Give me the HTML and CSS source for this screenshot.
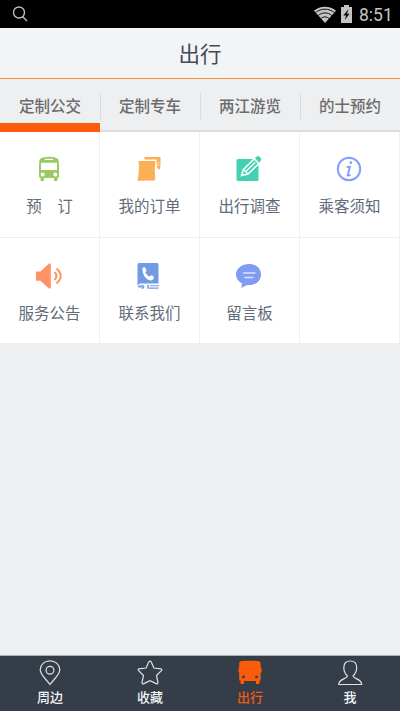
FILE: index.html
```html
<!DOCTYPE html>
<html lang="zh-CN">
<head>
<meta charset="utf-8">
<title>出行</title>
<link rel="stylesheet" href="styles.css">
</head>
<body>
<div class="screen">
  <div class="status">
    <svg class="search" width="16" height="16" viewBox="0 0 16 16" fill="none" stroke="#bdbdbd" stroke-width="1.4"><circle cx="7" cy="6.5" r="5.5"/><path d="M10.5 10.5 15 15"/></svg>
    <div class="status-right">
      <svg width="22" height="17" viewBox="0 0 22 17"><path fill="#c4c4c4" d="M0 4.7C6-.7 16-.7 22 4.7L11 17Z"/><path d="M1.5 6.7C7 2 15 2 20.500 6.700M4 9.600c4-3.600 10-3.600 14 0M6.700 12.700c2.500-2.400 6.100-2.400 8.600 0" fill="none" stroke="#111" stroke-width="1"/></svg>
      <svg width="11" height="18" viewBox="0 0 11 18"><path fill="#c4c4c4" d="M3 0h5v2h3v16H0V2h3Z"/><path fill="#111" d="M7.500 4 2.300 10.500h2.800L3.700 15l5-6.300H6Z"/></svg>
      <span class="clock">8:51</span>
    </div>
  </div>
  <header class="title">出行</header>
  <nav class="tabs">
    <div class="tab active">定制公交</div>
    <div class="tab">定制专车</div>
    <div class="tab">两江游览</div>
    <div class="tab">的士预约</div>
  </nav>
  <main class="grid">
    <div class="cell">
      <svg class="icon" viewBox="0 0 26 26"><path fill="#9bca63" fill-rule="evenodd" d="M3.500 4Q4 1 13 .700 22 1 22.500 4L23 9V21.500H21.500V24.500Q19.700 26 18 24.500V22H8V24.500Q6.300 26 4.500 24.500V21.500H3V9ZM9 2.700V4.100H17V2.700ZM5 6.700V14H21V6.700ZM6.700 16.600a2 2 0 1 0 0 4 2 2 0 1 0 0-4ZM19.300 16.600a2 2 0 1 0 0 4 2 2 0 1 0 0-4Z"/></svg>
      <span>预　订</span>
    </div>
    <div class="cell">
      <svg class="icon" viewBox="0 0 26 26"><path fill="#fbb056" d="M2.500 5H19.500Q18 14 19.300 23.500 18 25 16 24.500L1.500 24.700Q3.800 14 2.500 5ZM8.500 1H24.500V10L23.500 14 20.800 11.500V3.500H8.500Z"/><path d="M23 6 21.600 10.500" stroke="#fff" stroke-width=".7"/></svg>
      <span>我的订单</span>
    </div>
    <div class="cell">
      <svg class="icon" viewBox="0 0 26 26"><rect x=".5" y="3" width="22" height="22" rx="1.500" fill="#42d2b3"/><path d="M5.500 19.500 7.300 13.700 18.500 2.500 23.500 7 12 18Z" fill="#42d2b3" stroke="#fff" stroke-width="1.500"/><path d="M8 14 11.500 17.500M9.800 15.500 19 6.500M5 20l3-2" stroke="#fff" stroke-width="1.200"/><path d="m19 2 2-1.700q1.500-.6 2.800.7l1 1q1 1.500 0 2.700L23 6.500Z" fill="#42d2b3"/><path d="m17.500 3 5 5" stroke="#fff"/></svg>
      <span>出行调查</span>
    </div>
    <div class="cell">
      <svg class="icon" viewBox="0 0 26 26"><circle cx="13" cy="13" r="11.200" fill="none" stroke="#849eff" stroke-width="2"/><circle cx="14.800" cy="6.700" r="1.400" fill="#849eff"/><path d="M10.700 11h3.200L11.700 19.500q.8.500 2.700-.8" fill="none" stroke="#849eff" stroke-width="1.900"/></svg>
      <span>乘客须知</span>
    </div>
    <div class="cell">
      <svg class="icon" viewBox="0 0 26 26"><path fill="#fe9265" d="M0 8.500h4.500L13 .500h1.800v25H13L4.500 17.800H0Z"/><path d="M18.500 9q4 4 0 8M20.500 5.500q8.500 7.500 0 15" fill="none" stroke="#fe9265" stroke-width="2"/></svg>
      <span>服务公告</span>
    </div>
    <div class="cell">
      <svg class="icon" viewBox="0 0 26 26"><path fill="#719ce5" d="M3 0H21Q22.500 0 22.500 1.500V20.500H4Q2.500 20.500 2.500 22H1.500V2Q1.500 0 3 0ZM2 22.500h4v2H3q-1 0-1-1zM14 22.300h9v1h-9zM13 24.400h9.500v1.400H13z"/><path d="m6 22 1.700 1.700L6 25.800M12 21.800v4" fill="none" stroke="#719ce5" stroke-width="1.500"/><path fill="#fff" d="M6.500 5 8.500 4q1.500 1.500 2 4L9.300 9.500q1.500 2.700 4 4L15.500 12.300q2 .500 2.500 2.200Q17 18 14 17.500 6 14.500 6.500 5Z"/></svg>
      <span>联系我们</span>
    </div>
    <div class="cell">
      <svg class="icon" viewBox="0 0 26 26"><path fill="#7f9cf5" d="M13 1C20 1 25 5.300 25 11.500S20 22 13 22H11L5.200 25 6.200 20.500C2.500 18.500 0 15.500 0 11.500 0 5.300 6 1 13 1Z"/><path d="M7 10h12.500M8.500 14.500h9" stroke="#dce5ff" stroke-width="1.700"/></svg>
      <span>留言板</span>
    </div>
    <div class="cell"></div>
  </main>
  <nav class="bottom">
    <div class="item">
      <svg viewBox="0 0 26 26"><path d="M13 24.500C8 18 3.200 14.500 3.200 9.700a9.800 8.900 0 0 1 19.600 0C22.800 14.500 18 18 13 24.500Z"/><circle cx="13" cy="10.200" r="3.900"/></svg>
      <span>周边</span>
    </div>
    <div class="item">
      <svg viewBox="0 0 26 26"><path d="M11.800 1.800q1.200-1.500 2.400 0l2.700 6.200 7.100.8q1.500.500.400 1.900L19.500 15.500 21 22.500q0 1.900-1.800 1.100L13 20.700 6.800 23.600Q5 24.400 5 22.500L6.500 15.500 1.600 10.700Q.500 9.300 2 8.800L9.100 8Z"/></svg>
      <span>收藏</span>
    </div>
    <div class="item current">
      <svg viewBox="0 0 26 26"><path class="solid" fill-rule="evenodd" d="M2.200 3Q2.500 1.200 5 1 13 .3 21 1 23.400 1.200 23.600 3V7L24.500 8V12L23.600 13V20.500H22.500V24H19V21H7V24H3.500V20.500H2.200V13L1.500 12V8L2.200 7ZM6.500 15.500a1.400 1.400 0 1 0 0 2.800 1.400 1.400 0 1 0 0-2.800ZM19.500 15.500a1.400 1.400 0 1 0 0 2.800 1.400 1.400 0 1 0 0-2.800Z"/></svg>
      <span>出行</span>
    </div>
    <div class="item">
      <svg viewBox="0 0 26 26"><path d="M10.500 16C7.700 13.500 6.800 10.500 6.800 7.500 6.800 3 9.500 1 13.200 1S19.700 3 19.700 7.500C19.700 10.500 18.700 13.500 16 16 16.500 19 24.500 18.500 24.700 24.500H1.700C2 18.500 10 19 10.500 16Z"/></svg>
      <span>我</span>
    </div>
  </nav>
</div>
</body>
</html>
```

FILE: styles.css
```css
* { box-sizing: border-box; }
body {
  margin: 0;
  font-family: "Noto Sans CJK SC", sans-serif;
}
.screen {
  display: flex;
  flex-direction: column;
  height: 711px;
  background: #eeeff0;
}
svg { display: block; }
.status {
  display: flex;
  align-items: center;
  justify-content: space-between;
  height: 28px;
  padding: 0 8px 0 12px;
  background: #000;
}
.status-right {
  display: flex;
  align-items: center;
  gap: 5px;
}
.clock {
  margin-left: 2px;
  width: 33px;
  font: 17.500px/28px Roboto, sans-serif;
  padding-top: 1px;
  color: #c4c4c4;
  white-space: nowrap;
}
.title {
  height: 51px;
  border-bottom: 1.500px solid #fb9426;
  background: #f3f4f6;
  color: #414b5b;
  font-size: 21.500px;
  line-height: 49px;
  text-align: center;
}
.tabs {
  display: grid;
  grid-template-columns: repeat(4, 1fr);
  grid-template-rows: 53px;
  height: 53px;
  background: #eeeff1;
}
.tab {
  position: relative;
  border-bottom: 2px solid #dcddde;
  color: #6c6c6c;
  font-size: 15.500px;
  font-weight: 500;
  line-height: 53px;
  text-align: center;
}
.tab + .tab::before {
  content: "";
  position: absolute;
  left: 0;
  top: 14px;
  width: 1px;
  height: 26px;
  background: #dadbdd;
}
.tab.active { border-bottom: 9px solid #fc5b0b; }
.grid {
  display: grid;
  grid-template-columns: repeat(4, 1fr);
  grid-auto-rows: 106px;
}
.cell {
  display: flex;
  flex-direction: column;
  align-items: center;
  padding: 24px 0 0;
  border-right: 1px solid #f0f0f1;
  border-bottom: 1px solid #eeeff0;
  background: #fff;
  color: #626b79;
  font-size: 15.500px;
  line-height: 24px;
}
.icon {
  width: 26px;
  height: 26px;
  margin: 0 1px 11px 0;
}
.cell:nth-child(n+5) { padding-top: 25px; }
.bottom {
  display: grid;
  grid-template-columns: repeat(4, 1fr);
  height: 56px;
  margin-top: auto;
  border-top: 1px solid #a9b2b8;
  background: #343d48;
}
.item {
  display: flex;
  flex-direction: column;
  align-items: center;
  padding-top: 4px;
  color: #f4f5f6;
  font-size: 13px;
  font-weight: 500;
  line-height: 21px;
}
.item svg {
  width: 26px;
  height: 26px;
  fill: none;
  stroke: #dfe2e5;
  stroke-width: 1.200;
}
.item .solid {
  fill: #fc5b0b;
  stroke: none;
}
.item.current { color: #f05a17; }
```
